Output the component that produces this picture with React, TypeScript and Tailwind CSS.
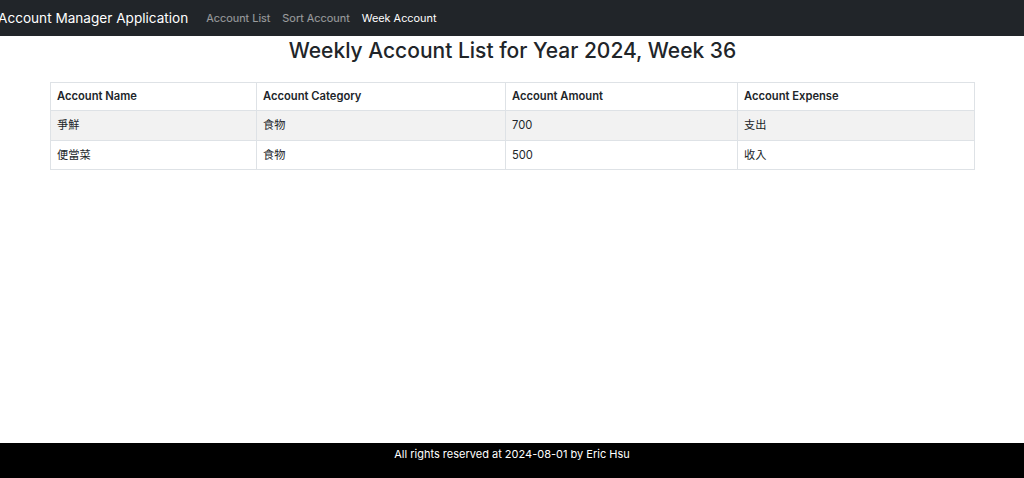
const rows = [
  { name: "爭鮮", category: "食物", amount: 700, expense: "支出" },
  { name: "便當菜", category: "食物", amount: 500, expense: "收入" },
];

const font = { fontFamily: 'Inter, "Noto Sans CJK TC", sans-serif' };

export default function App() {
  return (
    <div className="flex min-h-screen flex-col bg-white text-[#212529]" style={font}>
      <nav className="flex h-9 items-center bg-[#212529]">
        <a href="#" className="-ml-[2px] mr-[18px] text-[13.6px] text-white">
          Account Manager Application
        </a>
        <div className="flex gap-[12px] text-[10.9px]">
          <a href="#" className="text-white/55">Account List</a>
          <a href="#" className="text-white/55">Sort Account</a>
          <a href="#" className="text-white">Week Account</a>
        </div>
      </nav>

      <main className="pl-[50px] pr-[49px]">
        <h2 className="mt-[1px] text-center text-[21px] leading-[28px] font-medium">
          Weekly Account List for Year 2024, Week 36
        </h2>
        <table className="mt-[17px] w-full border-collapse border border-[#dee2e6] text-[11.2px]">
          <thead>
            <tr className="h-[28px] text-left">
              <th className="w-[206px] border border-[#dee2e6] px-[6px] font-semibold">Account Name</th>
              <th className="w-[249px] border border-[#dee2e6] px-[6px] font-semibold">Account Category</th>
              <th className="w-[232px] border border-[#dee2e6] px-[6px] font-semibold">Account Amount</th>
              <th className="border border-[#dee2e6] px-[6px] font-semibold">Account Expense</th>
            </tr>
          </thead>
          <tbody>
            {rows.map((r, i) => (
              <tr key={r.name} className={i % 2 === 0 ? "h-[30px] bg-[#f2f2f2]" : "h-[29px]"}>
                <td className="border border-[#dee2e6] px-[6px]">{r.name}</td>
                <td className="border border-[#dee2e6] px-[6px]">{r.category}</td>
                <td className="border border-[#dee2e6] px-[6px]">{r.amount}</td>
                <td className="border border-[#dee2e6] px-[6px]">{r.expense}</td>
              </tr>
            ))}
          </tbody>
        </table>
      </main>

      <footer className="mt-auto h-[35px] bg-black pt-[3px] text-center text-[11px] text-white">
        All rights reserved at 2024-08-01 by Eric Hsu
      </footer>
    </div>
  );
}
